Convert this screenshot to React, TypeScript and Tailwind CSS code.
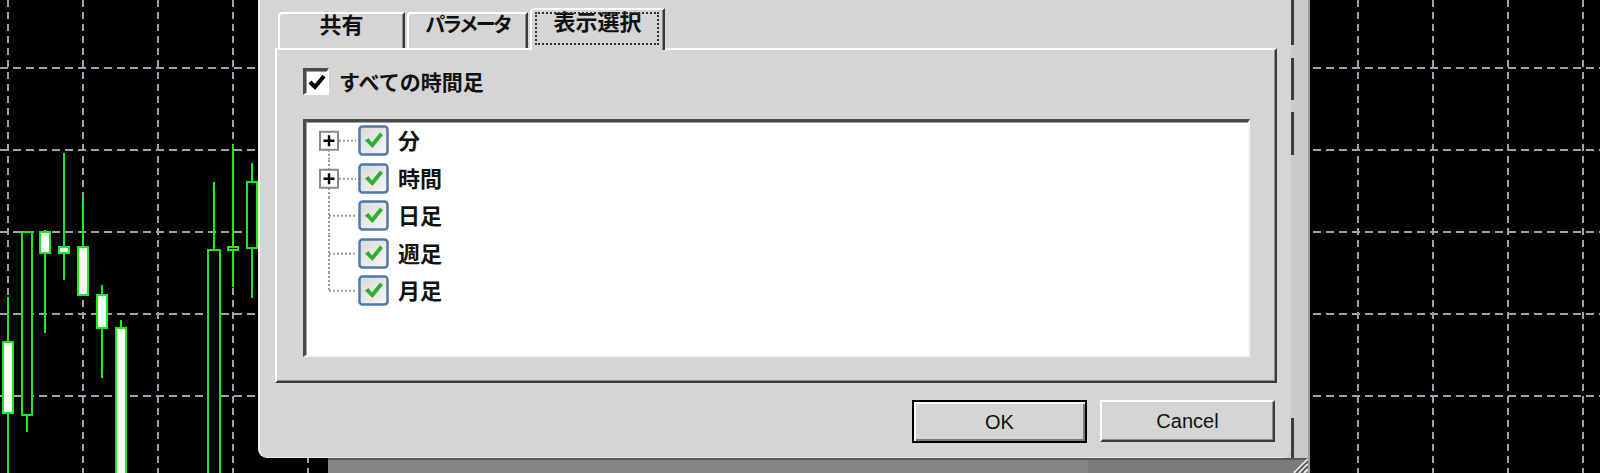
import React from "react";

// Background chart: dashed grid + a handful of candles
type Candle = { x: number; wTop: number; wBot: number; bTop: number; bBot: number; fill: string; w?: number };

const candles: Candle[] = [
  { x: 8, wTop: 297, wBot: 480, bTop: 342, bBot: 413, fill: "#ffffff" },
  { x: 27, wTop: 232, wBot: 432, bTop: 232, bBot: 415, fill: "#000000" },
  { x: 45, wTop: 230, wBot: 333, bTop: 232, bBot: 253, fill: "#ffffff" },
  { x: 64, wTop: 153, wBot: 280, bTop: 247, bBot: 253, fill: "#ffffff" },
  { x: 83, wTop: 198, wBot: 247, bTop: 247, bBot: 295, fill: "#ffffff" },
  { x: 102, wTop: 285, wBot: 378, bTop: 295, bBot: 328, fill: "#ffffff" },
  { x: 121, wTop: 320, wBot: 480, bTop: 328, bBot: 480, fill: "#ffffff" },
  { x: 214, wTop: 182, wBot: 480, bTop: 250, bBot: 480, fill: "#000000", w: 12 },
  { x: 233, wTop: 145, wBot: 287, bTop: 247, bBot: 250, fill: "#000000" },
  { x: 252, wTop: 163, wBot: 298, bTop: 182, bBot: 248, fill: "#000000" },
];

const vLines = Array.from({ length: 22 }, (_, i) => 8 + 75 * i);
const hLines = [68, 150, 232, 314, 396];

function Chart() {
  return (
    <svg className="absolute inset-0" width="1600" height="473" viewBox="0 0 1600 473">
      <rect width="1600" height="473" fill="#000" />
      {vLines.map((x) => (
        <line key={"v" + x} x1={x} y1={0} x2={x} y2={473} stroke="#9ba3ad" strokeWidth={2} strokeDasharray="7 5" />
      ))}
      {hLines.map((y) => (
        <line key={"h" + y} x1={0} y1={y} x2={1600} y2={y} stroke="#9ba3ad" strokeWidth={2} strokeDasharray="8 5" />
      ))}
      {candles.map((c, i) => {
        const w = c.w ?? 10;
        return (
          <g key={i}>
            <line x1={c.x} y1={c.wTop} x2={c.x} y2={c.wBot} stroke="#1ee81e" strokeWidth={2} />
            <rect
              x={c.x - w / 2}
              y={c.bTop}
              width={w}
              height={Math.max(c.bBot - c.bTop, 3)}
              fill={c.fill}
              stroke="#1ee81e"
              strokeWidth={2}
            />
          </g>
        );
      })}
    </svg>
  );
}

// window sitting behind the dialog (only its right strip and bottom band show)
function BackWindow() {
  return (
    <div className="absolute left-[328px] top-0 w-[982px] h-[473px] bg-[#c9c9c9] border-r-2 border-r-[#9a9a9a]">
      <div className="absolute left-[963px] top-0 w-[3px] h-[45px] bg-[#3c3c3c]" />
      <div className="absolute left-[963px] top-[58px] w-[3px] h-[42px] bg-[#3c3c3c]" />
      <div className="absolute left-[963px] top-[112px] w-[3px] h-[43px] bg-[#3c3c3c]" />
      <div className="absolute left-[963px] top-[418px] w-[3px] h-[42px] bg-[#3c3c3c]" />
      <div className="absolute left-0 bottom-0 w-full h-[15px] bg-[#7b7b7b] border-t-2 border-t-[#5a5a5a]">
        <div className="w-[760px] h-full bg-[#858585]" />
      </div>
      <svg className="absolute right-0 bottom-0" width="18" height="18" viewBox="0 0 18 18">
        <path d="M18 4 L4 18 M18 9 L9 18 M18 14 L14 18" stroke="#e8e8e8" strokeWidth={2} />
        <path d="M18 6 L6 18 M18 11 L11 18" stroke="#555" strokeWidth={1.5} />
      </svg>
    </div>
  );
}

function Tab({ label, selected, width, narrow }: { label: string; selected?: boolean; width: string; narrow?: boolean }) {
  return (
    <div
      className={
        "relative flex items-start justify-center bg-[#d5d5d5] border-t-2 border-l-2 border-white rounded-tl-[4px] border-r-2 border-r-[#3a3a3a] shadow-[inset_-1px_0_0_#8c8c8c] " +
        width +
        (selected ? " h-[42px] -mb-[2px] z-10 pt-[1px]" : " h-[36px]")
      }
    >
      {selected ? (
        <div className="absolute left-[3px] right-[4px] top-[2px] bottom-[5px] border-2 border-dotted border-[#333]" />
      ) : null}
      <span
        className={
          "font-bold leading-none text-[#111] " +
          (narrow ? "tracking-[-3px] text-[20px] mt-0" : "text-[22px] -mt-[2px]")
        }
      >
        {label}
      </span>
    </div>
  );
}

function ClassicCheck() {
  return (
    <div className="w-[26px] h-[27px] bg-white border-t-[3px] border-l-[3px] border-[#4a4a4a] border-b-2 border-r-2 border-b-white border-r-white shadow-[inset_1px_1px_0_#9a9a9a] flex items-center justify-center">
      <svg width="18" height="18" viewBox="0 0 18 18">
        <path d="M2 9 L7 14 L16 3" fill="none" stroke="#000" strokeWidth={4} strokeLinejoin="miter" />
      </svg>
    </div>
  );
}

function ThemedCheck() {
  return (
    <svg width="31" height="31" viewBox="0 0 31 31" className="shrink-0">
      <defs>
        <linearGradient id="cbg" x1="0" y1="0" x2="1" y2="1">
          <stop offset="0" stopColor="#d9d9d9" />
          <stop offset="1" stopColor="#f7f7f7" />
        </linearGradient>
      </defs>
      <rect x="1.5" y="1.5" width="28" height="28" rx="3" fill="url(#cbg)" stroke="#4d7aa8" strokeWidth={2.5} />
      <path d="M7 15.5 L10.5 13 L14 17.5 L22 7.5 L25 10 L14.5 23 Z" fill="#2fae2f" />
    </svg>
  );
}

type Row = { label: string; expandable?: boolean };
const rows: Row[] = [
  { label: "分", expandable: true },
  { label: "時間", expandable: true },
  { label: "日足" },
  { label: "週足" },
  { label: "月足" },
];

function TreeGutter({ index, last, expandable }: { index: number; last: boolean; expandable?: boolean }) {
  const cy = 18.75;
  return (
    <svg width="52" height="37.5" viewBox="0 0 52 37.5" className="shrink-0">
      {/* vertical connector */}
      {index === 0 ? (
        <line x1="23" y1={cy + 9} x2="23" y2="37.5" stroke="#9a9a9a" strokeWidth={2} strokeDasharray="2 2" />
      ) : last ? (
        <line x1="23" y1="0" x2="23" y2={cy} stroke="#9a9a9a" strokeWidth={2} strokeDasharray="2 2" />
      ) : (
        <line x1="23" y1="0" x2="23" y2="37.5" stroke="#9a9a9a" strokeWidth={2} strokeDasharray="2 2" />
      )}
      <line x1={expandable ? 33 : 23} y1={cy} x2="50" y2={cy} stroke="#9a9a9a" strokeWidth={2} strokeDasharray="2 2" />
      {expandable ? (
        <g>
          <rect x="14" y={cy - 9} width="18" height="18" fill="#fff" stroke="#8a8a8a" strokeWidth={2} />
          <path d={`M17.5 ${cy} H28.5 M23 ${cy - 5.5} V${cy + 5.5}`} stroke="#000" strokeWidth={2.4} />
        </g>
      ) : null}
    </svg>
  );
}

export default function App() {
  const jp = "font-['Noto_Sans_CJK_JP','Noto_Sans',sans-serif]";
  return (
    <div className={"relative w-[1600px] h-[473px] overflow-hidden bg-black " + jp}>
      <Chart />
      <BackWindow />

      {/* dialog */}
      <div className="absolute left-[258px] top-0 w-[1033px] h-[458px] bg-[#d5d5d5] rounded-b-[9px] border-l-2 border-l-[#f0f0f0] border-b border-b-[#ececec] flex flex-col pl-[15px] pr-[14px] pt-[8px]">
        {/* tabs */}
        <div className="flex items-end pl-[3px] gap-[2px]">
          <Tab label="共有" width="w-[127px]" />
          <Tab label="パラメータ" width="w-[121px]" narrow />
          <Tab label="表示選択" width="w-[135px]" selected />
        </div>

        {/* tab body */}
        <div className="w-[1002px] h-[335px] border-t-2 border-l-2 border-white border-r-2 border-b-2 border-r-[#3a3a3a] border-b-[#3a3a3a] shadow-[inset_-1px_-1px_0_#8c8c8c] pl-[26px] pt-[18px] flex flex-col">
          <div className="flex items-center gap-[10px] h-[27px]">
            <ClassicCheck />
            <span className="text-[21px] font-bold leading-none text-[#111]">すべての時間足</span>
          </div>

          <div className="mt-[24px] w-[947px] h-[238px] bg-white border-t-[3px] border-l-[3px] border-[#4a4a4a] border-b-2 border-r-2 border-b-[#f4f4f4] border-r-[#f4f4f4] shadow-[inset_1px_1px_0_#a0a0a0] flex flex-col">
            {rows.map((r, i) => (
              <div key={r.label} className="flex items-center h-[37.5px]">
                <TreeGutter index={i} last={i === rows.length - 1} expandable={r.expandable} />
                <ThemedCheck />
                <span className="ml-[9px] -mt-[3px] text-[22px] font-bold leading-none text-[#111]">{r.label}</span>
              </div>
            ))}
          </div>
        </div>

        {/* buttons */}
        <div className="mt-[17px] flex justify-end gap-[13px] pr-[2px] font-['Liberation_Sans',sans-serif]">
          <button className="w-[175px] h-[43px] border-2 border-black bg-[#d5d5d5] shadow-[inset_2px_2px_0_#fbfbfb,inset_-2px_-2px_0_#7c7c7c] text-[20px] text-[#111]">
            OK
          </button>
          <button className="w-[175px] h-[42px] border-t-2 border-l-2 border-white border-b-2 border-r-2 border-b-[#3a3a3a] border-r-[#3a3a3a] bg-[#d5d5d5] shadow-[inset_-1px_-1px_0_#8c8c8c] text-[20px] text-[#111]">
            Cancel
          </button>
        </div>
      </div>
    </div>
  );
}
